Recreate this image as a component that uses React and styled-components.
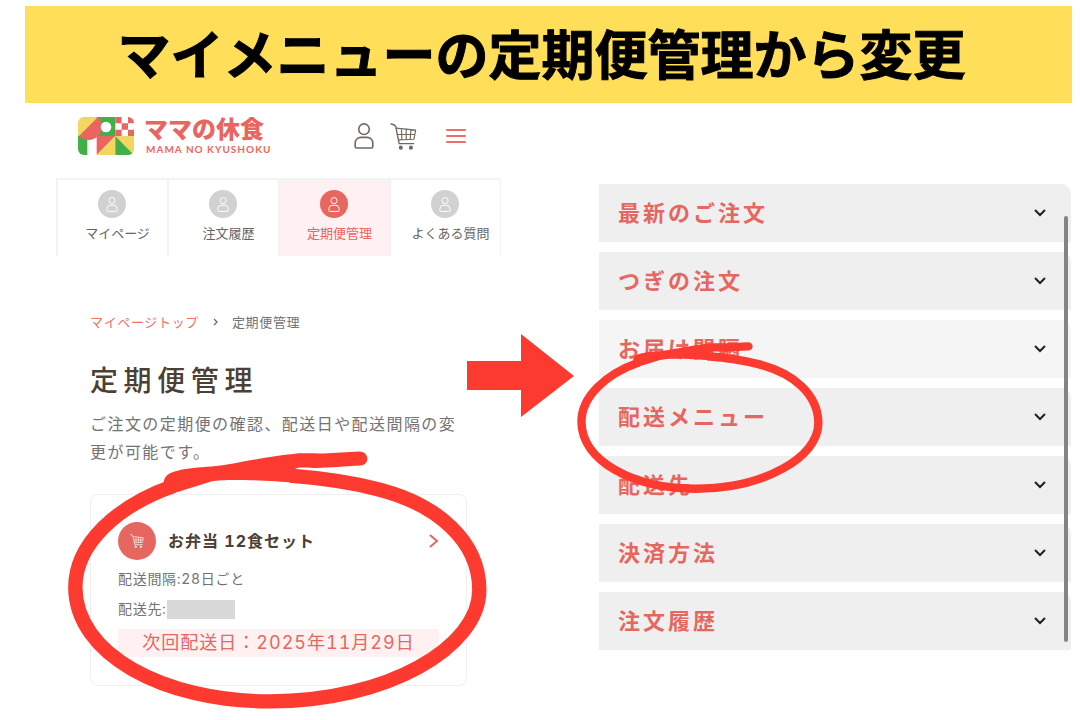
import React from "react";
import styled, { createGlobalStyle } from "styled-components";

const tabs = [
  { label: "マイページ" },
  { label: "注文履歴" },
  { label: "定期便管理", active: true },
  { label: "よくある質問" },
];

const sections = [
  { label: "最新のご注文" },
  { label: "つぎの注文" },
  { label: "お届け間隔", light: true },
  { label: "配送メニュー", marked: true },
  { label: "配送先" },
  { label: "決済方法" },
  { label: "注文履歴" },
];

const LogoMark = () => (
  <svg width="56" height="38" viewBox="0 0 168 114" aria-hidden="true">
    <defs>
      <clipPath id="mark">
        <rect width="168" height="114" rx="18" />
      </clipPath>
    </defs>
    <g clipPath="url(#mark)">
      <rect width="168" height="114" fill="#fff" />
      <rect width="56" height="57" fill="#f3d660" />
      <rect x="56" width="56" height="57" fill="#43af4b" />
      <rect y="57" width="28" height="57" fill="#43af4b" />
      <path d="M3 57L60 0A40 40 0 0 1 3 57z" fill="#e8665f" />
      <circle cx="84" cy="30" r="16" fill="#fff" />
      <path
        d="M112 0h19v19h-19zM150 0h18v19h-18zM131 19h19v19h-19zM112 38h19v19h-19zM150 38h18v19h-18z"
        fill="#e8665f"
      />
      <path d="M56 57h56L56 114z" fill="#e8665f" />
      <path d="M112 57v57H56z" fill="#f3d660" />
      <path d="M112 57h56v57z" fill="#f3d660" />
      <path d="M112 57v57h56z" fill="#43af4b" />
    </g>
  </svg>
);

const UserIcon = ({ width = 20, height = 26, stroke = 1.6 }) => (
  <svg
    width={width}
    height={height}
    viewBox="0 0 20 26"
    fill="none"
    stroke="currentColor"
    strokeWidth={stroke}
    aria-hidden="true"
  >
    <circle cx="10" cy="6.2" r="5.3" />
    <path d="M1.2 24v-4a5.6 5.6 0 0 1 5.6-5.6h6.4a5.6 5.6 0 0 1 5.6 5.6v4q0 1-1 1H2.2q-1 0-1-1z" />
  </svg>
);

const CartIcon = ({ size = 27 }) => (
  <svg
    width={size}
    height={size}
    viewBox="360 54 80 80"
    fill="none"
    stroke="currentColor"
    strokeWidth="4"
    strokeLinecap="round"
    strokeLinejoin="round"
    aria-hidden="true"
  >
    <path d="M363 57q10 1 14 7l10 51h43" />
    <path d="M378 69l58 6-5 27-46 2M382 88l51 0M394 71l1 32M408 72v30M422 74l-2 27" strokeWidth="3.4" />
    <circle cx="392" cy="127" r="4" fill="currentColor" />
    <circle cx="422" cy="127" r="4" fill="currentColor" />
  </svg>
);

const Chevron = ({ width, height, d, stroke }) => (
  <svg
    width={width}
    height={height}
    viewBox={`0 0 ${width} ${height}`}
    fill="none"
    stroke="currentColor"
    strokeWidth={stroke}
    aria-hidden="true"
  >
    <path d={d} />
  </svg>
);

const Ring = () => (
  <svg viewBox="24 32 1256 772" width="100%" height="100%" aria-hidden="true">
    <path
      fill="none"
      stroke="#fc3a30"
      strokeWidth="43"
      d="M340 136C170 196 46 310 46 440C46 640 310 782 630 782C980 782 1257 620 1257 448C1257 300 1130 190 950 145C860 122 780 112 690 105"
    />
    <path
      fill="#fc3a30"
      d="M310 130C312 104 325 98 350 91C385 82 415 81 455 78C530 70 610 48 700 40C730 37 750 39 790 39L896 33C928 32 930 74 900 75C850 77 800 83 760 82C735 82 710 78 703 87L700 126C640 121 500 113 455 122C410 136 370 150 330 160Z"
    />
  </svg>
);

const App = () => {
  return (
    <>
      <GlobalStyle />
      <Banner>
        <h1>マイメニューの定期便管理から変更</h1>
      </Banner>
      <Main>
        <Phone>
          <Header>
            <Brand href="#">
              <LogoMark />
              <BrandText>
                <BrandName>ママの休食</BrandName>
                <BrandSub>MAMA NO KYUSHOKU</BrandSub>
              </BrandText>
            </Brand>
            <Tools>
              <IconButton aria-label="マイページ">
                <UserIcon />
              </IconButton>
              <IconButton aria-label="カート">
                <CartIcon />
              </IconButton>
              <MenuButton aria-label="メニュー">
                <svg width="20" height="16" viewBox="0 0 20 16" stroke="currentColor" strokeWidth="2" strokeLinecap="round">
                  <path d="M1 2h18M1 8h18M1 14h18" />
                </svg>
              </MenuButton>
            </Tools>
          </Header>
          <Tabs>
            {tabs.map((tab) => (
              <Tab key={tab.label} href="#" $active={tab.active}>
                <TabIcon $active={tab.active}>
                  <UserIcon width={12} height={15} />
                </TabIcon>
                <TabLabel>{tab.label}</TabLabel>
              </Tab>
            ))}
          </Tabs>
          <Content>
            <Breadcrumb>
              <a href="#">マイページトップ</a>
              <Chevron width={5} height={8} d="M1 1l3 3-3 3" stroke={1.3} />
              <span>定期便管理</span>
            </Breadcrumb>
            <Heading>定期便管理</Heading>
            <Lead>ご注文の定期便の確認、配送日や配送間隔の変更が可能です。</Lead>
            <Card href="#">
              <CardHead>
                <CardIcon>
                  <CartIcon size={14} />
                </CardIcon>
                <CardTitle>お弁当 12食セット</CardTitle>
                <Chevron width={10} height={16} d="M1 2l7 6-7 6" stroke={2} />
              </CardHead>
              <Detail>配送間隔:28日ごと</Detail>
              <Detail>
                配送先:
                <Redacted />
              </Detail>
              <NextDate>次回配送日：2025年11月29日</NextDate>
              <CardRing>
                <Ring />
              </CardRing>
            </Card>
          </Content>
          <Arrow viewBox="0 0 107 83" aria-hidden="true">
            <path d="M0 27h54V0l53 42-53 41V56H0z" fill="#fc3a30" />
          </Arrow>
        </Phone>
        <Sections>
          {sections.map((section) => (
            <Section key={section.label}>
              <SectionButton $light={section.light}>
                {section.label}
                <Chevron width={12} height={8} d="M1 1l5 5 5-5" stroke={2} />
              </SectionButton>
              {section.marked && (
                <MenuRing>
                  <Ring />
                </MenuRing>
              )}
            </Section>
          ))}
          <ScrollThumb />
        </Sections>
      </Main>
    </>
  );
};

const GlobalStyle = createGlobalStyle`
  * {
    box-sizing: border-box;
    margin: 0;
    padding: 0;
  }
  body {
    background: #fff;
    color: #737373;
    font-family: Inter, "Noto Sans CJK JP", sans-serif;
    font-variant-numeric: tabular-nums;
  }
  a {
    color: inherit;
    text-decoration: none;
  }
  button {
    border: none;
    background: none;
    color: inherit;
    font: inherit;
    cursor: pointer;
  }
  svg {
    display: block;
    flex-shrink: 0;
  }
`;

const Banner = styled.header`
  margin: 6px 8px 0 25px;
  padding: 10px 14px 7px 0;
  background: #ffde59;
  text-align: center;
  h1 {
    color: #000;
    font-size: 53px;
    line-height: 80px;
    font-weight: 700;
    -webkit-text-stroke: 1px #000;
  }
`;

const Main = styled.main`
  display: grid;
  grid-template-columns: 445fr 472fr;
  gap: 98px;
  padding: 0 9px 34px 56px;
`;

const Phone = styled.section`
  position: relative;
`;

const Header = styled.div`
  display: flex;
  align-items: center;
  justify-content: space-between;
  padding: 14px 35px 23px 22px;
`;

const Brand = styled.a`
  display: flex;
  align-items: center;
  gap: 10px;
  color: #e8665f;
`;

const BrandText = styled.span`
  display: flex;
  flex-direction: column;
`;

const BrandName = styled.span`
  font-size: 24px;
  line-height: 26px;
  font-weight: 900;
`;

const BrandSub = styled.span`
  padding-left: 2px;
  font-family: Lato, sans-serif;
  font-size: 10px;
  line-height: 12px;
  font-weight: 700;
  letter-spacing: 1px;
`;

const Tools = styled.div`
  display: flex;
  align-items: center;
  gap: 16px;
  color: #72675d;
`;

const IconButton = styled.button`
  display: flex;
`;

const MenuButton = styled(IconButton)`
  margin-left: 13px;
  color: #ee6c66;
`;

const Tabs = styled.nav`
  display: grid;
  grid-template-columns: repeat(4, 1fr);
  border-right: 1px solid #f3f3f3;
`;

const Tab = styled.a`
  display: flex;
  flex-direction: column;
  align-items: center;
  gap: 5px;
  padding: 10px 2px 13px 0;
  border-top: 2px solid #f3f3f3;
  border-left: 2px solid #f3f3f3;
  background: ${({ $active }) => ($active ? "#fff1f1" : "#fff")};
  color: ${({ $active }) => ($active ? "#e8665f" : "#666")};
`;

const TabIcon = styled.span`
  display: flex;
  align-items: center;
  justify-content: center;
  width: 28px;
  height: 28px;
  border-radius: 50%;
  background: ${({ $active }) => ($active ? "#e5675f" : "#d1d1d1")};
  color: #fff;
`;

const TabLabel = styled.span`
  padding-left: 12px;
  font-size: 13px;
  line-height: 20px;
  white-space: nowrap;
`;

const Content = styled.div`
  padding: 56px 34px 0;
`;

const Breadcrumb = styled.nav`
  display: flex;
  align-items: center;
  gap: 14px;
  font-size: 13px;
  line-height: 20px;
  letter-spacing: 0.05em;
  a {
    color: #ee7069;
  }
  svg {
    color: #5b6b8c;
  }
`;

const Heading = styled.h2`
  margin-top: 29px;
  color: #4c4034;
  font-size: 28px;
  line-height: 40px;
  font-weight: 500;
  letter-spacing: 0.2em;
`;

const Lead = styled.p`
  margin: 9px 0 28px;
  font-size: 16px;
  line-height: 28px;
  letter-spacing: 0.09em;
`;

const Card = styled.a`
  position: relative;
  display: block;
  padding: 27px 27px 28px;
  border: 1px solid #efefef;
  border-radius: 8px;
`;

const CardHead = styled.div`
  display: flex;
  align-items: center;
  gap: 12px;
  margin-bottom: 4px;
  color: #e5675f;
`;

const CardIcon = styled.span`
  display: flex;
  align-items: center;
  justify-content: center;
  width: 38px;
  height: 38px;
  border-radius: 50%;
  background: #e5675f;
  color: #fff;
`;

const CardTitle = styled.h3`
  flex: 1;
  color: #4c4034;
  font-size: 16px;
  line-height: 28px;
  font-weight: 700;
  letter-spacing: 1px;
`;

const Detail = styled.p`
  display: flex;
  align-items: center;
  font-size: 14px;
  line-height: 30px;
  letter-spacing: 0.05em;
`;

const Redacted = styled.span`
  width: 68px;
  height: 19px;
  background: #d8d8d8;
`;

const NextDate = styled.p`
  margin-top: 5px;
  background: #fff1f1;
  color: #e5675f;
  font-size: 18px;
  line-height: 28px;
  letter-spacing: 1px;
  text-align: center;
`;

const CardRing = styled.span`
  position: absolute;
  top: -44px;
  left: -23px;
  width: 419px;
  height: 258px;
`;

const Arrow = styled.svg`
  position: absolute;
  top: 231px;
  right: -73px;
  width: 107px;
  height: 83px;
`;

const Sections = styled.ul`
  position: relative;
  display: flex;
  flex-direction: column;
  align-self: start;
  gap: 10px;
  margin-top: 81px;
  list-style: none;
`;

const Section = styled.li`
  position: relative;
`;

const SectionButton = styled.button`
  display: flex;
  align-items: center;
  justify-content: space-between;
  width: 100%;
  padding: 13px 25px 13px 19px;
  border-radius: 0 10px 0 0;
  background: ${({ $light }) => ($light ? "#f5f5f5" : "#efefef")};
  color: #e5675f;
  font-size: 22px;
  line-height: 32px;
  font-weight: 700;
  letter-spacing: 3px;
  svg {
    color: #1a202e;
  }
`;

const MenuRing = styled.span`
  position: absolute;
  z-index: 1;
  top: -46px;
  left: -22px;
  width: 246px;
  height: 151px;
`;

const ScrollThumb = styled.span`
  position: absolute;
  top: 32px;
  right: 3px;
  bottom: 8px;
  width: 4px;
  border-radius: 2px;
  background: #848484;
`;

export default App;
